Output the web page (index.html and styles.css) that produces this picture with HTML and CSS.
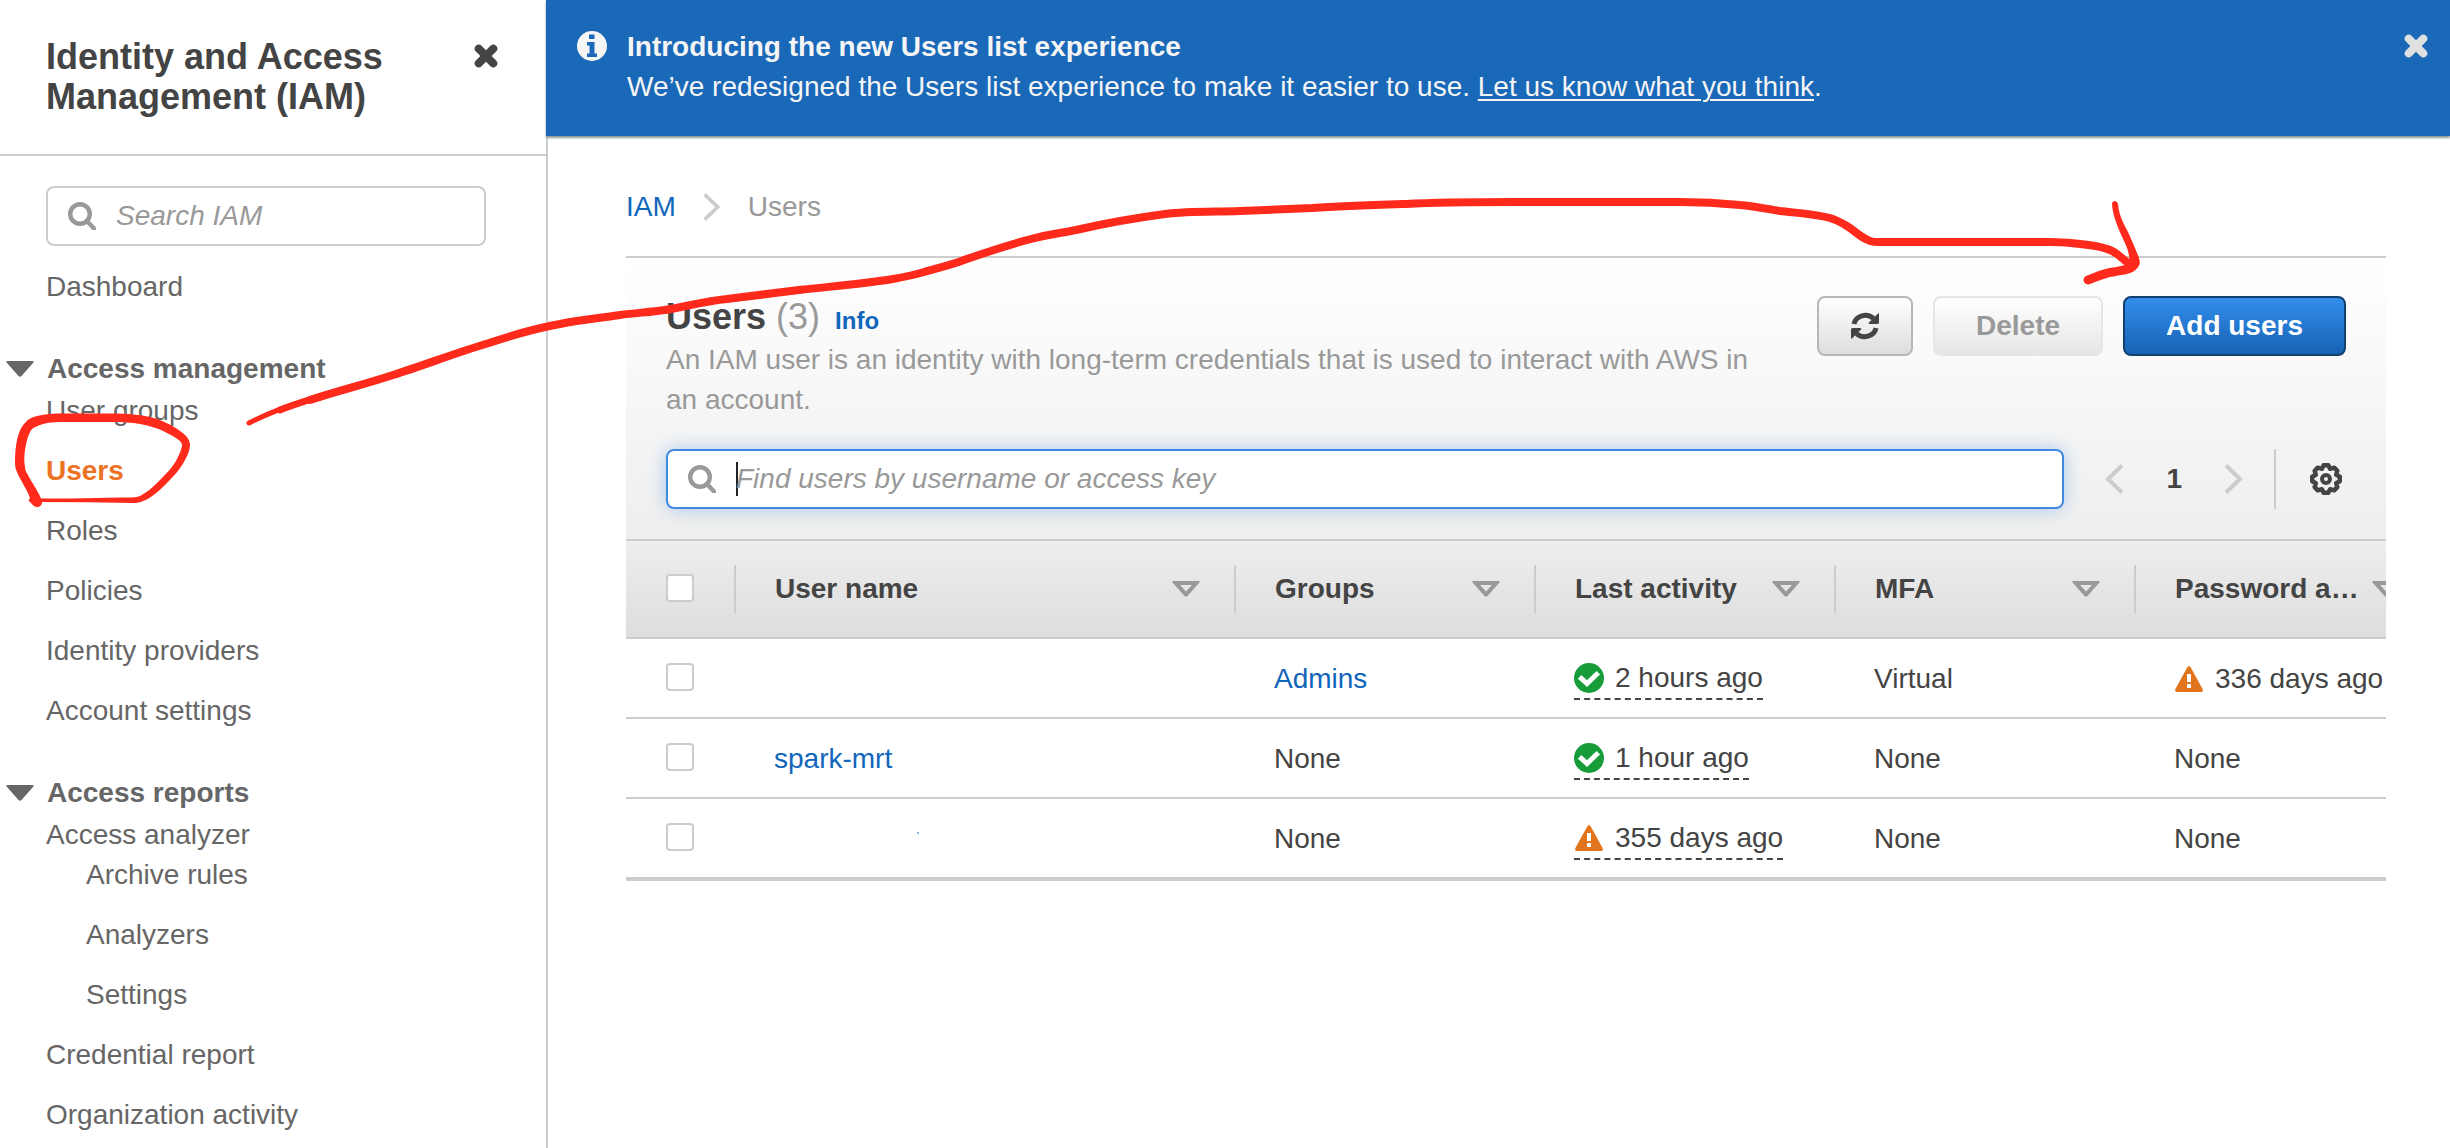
FILE: index.html
```html
<!DOCTYPE html>
<html lang="en">
<head>
<meta charset="utf-8">
<title>IAM - Users</title>
<link rel="stylesheet" href="styles.css">
</head>
<body>
<svg class="sprite" aria-hidden="true">
  <symbol id="i-close" viewBox="0 0 24 24"><path d="M4.700 4.700L19.300 19.300M19.300 4.700L4.700 19.300" fill="none" stroke="currentColor" stroke-width="8" stroke-linecap="round"/></symbol>
  <symbol id="i-search" viewBox="0 0 28 28"><circle cx="12" cy="12" r="9.800" fill="none" stroke="currentColor" stroke-width="4.400"/><path d="M19 19L26 26.500" stroke="currentColor" stroke-width="4.400" stroke-linecap="round"/></symbol>
  <symbol id="i-caret" viewBox="0 0 28 16"><path d="M1.500 0H26.500Q29 0 27 2L15.500 15Q14 16.500 12.500 15L1 2Q-1 0 1.500 0Z" fill="currentColor"/></symbol>
  <symbol id="i-sort" viewBox="0 0 28 16"><path fill-rule="evenodd" d="M1.500 0H26.500Q29 0 27 2L15.500 15Q14 16.500 12.500 15L1 2Q-1 0 1.500 0ZM8 4L14 10.500L20 4Z" fill="currentColor"/></symbol>
  <symbol id="i-next" viewBox="0 0 20 30"><path d="M2 1.500L16 15L2 28.500" fill="none" stroke="currentColor" stroke-width="4"/></symbol>
  <symbol id="i-prev" viewBox="0 0 20 30"><path d="M18 1.500L4 15L18 28.500" fill="none" stroke="currentColor" stroke-width="4"/></symbol>
  <symbol id="i-ok" viewBox="0 0 30 30"><circle cx="15" cy="15" r="15" fill="#169c38"/><path d="M7.500 15.500L13 20.500L22.500 11.500" fill="none" stroke="#fff" stroke-width="5" stroke-linecap="square"/></symbol>
  <symbol id="i-warn" viewBox="0 0 28 26"><path d="M14 0Q15 0 15.800 1.500L27.600 23Q28.600 26 26.500 26H1.500Q-.6 26 .4 23L12.200 1.500Q13 0 14 0Z" fill="#e0751d"/><path d="M12 8h4v8h-4zM12 18h4v4h-4z" fill="#fff"/></symbol>
</svg>

<div class="app">
  <aside class="sidebar">
    <header class="side-head">
      <h2>Identity and Access Management (IAM)</h2>
      <button class="icon-btn" aria-label="Close navigation"><svg class="s24"><use href="#i-close"/></svg></button>
    </header>
    <nav class="side-nav">
      <label class="field side-search">
        <svg class="s28"><use href="#i-search"/></svg>
        <input type="text" placeholder="Search IAM" aria-label="Search IAM">
      </label>
      <a href="#">Dashboard</a>
      <section>
        <h3><svg class="caret"><use href="#i-caret"/></svg>Access management</h3>
        <ul>
          <li><a href="#">User groups</a></li>
          <li><a href="#" class="active" aria-current="page">Users</a></li>
          <li><a href="#">Roles</a></li>
          <li><a href="#">Policies</a></li>
          <li><a href="#">Identity providers</a></li>
          <li><a href="#">Account settings</a></li>
        </ul>
      </section>
      <section>
        <h3><svg class="caret"><use href="#i-caret"/></svg>Access reports</h3>
        <ul>
          <li><a href="#">Access analyzer</a>
            <ul class="sub">
              <li><a href="#">Archive rules</a></li>
              <li><a href="#">Analyzers</a></li>
              <li><a href="#">Settings</a></li>
            </ul>
          </li>
          <li><a href="#">Credential report</a></li>
          <li><a href="#">Organization activity</a></li>
        </ul>
      </section>
    </nav>
  </aside>

  <div class="content">
    <div class="banner" role="status">
      <svg class="s30" viewBox="0 0 30 30"><circle cx="15" cy="15" r="15" fill="#f5f5f5"/><path d="M12 3.500h5.500v4.500H12zM10 11h7.500v11.500H20V26H10v-3.500h2.500V14.500H10z" fill="#1a68b8"/></svg>
      <div class="banner-text">
        <strong>Introducing the new Users list experience</strong>
        <p>We’ve redesigned the Users list experience to make it easier to use. <a href="#">Let us know what you think</a>.</p>
      </div>
      <button class="icon-btn light" aria-label="Dismiss"><svg class="s24"><use href="#i-close"/></svg></button>
    </div>

    <main>
      <nav class="crumbs" aria-label="Breadcrumb">
        <a href="#">IAM</a>
        <svg class="chev"><use href="#i-next"/></svg>
        <span>Users</span>
      </nav>

      <section class="panel">
        <div class="panel-head">
          <div class="title-row">
            <div class="title">
              <h1>Users <span>(3)</span> <a href="#">Info</a></h1>
              <p>An IAM user is an identity with long-term credentials that is used to interact with AWS in an account.</p>
            </div>
            <div class="actions">
              <button class="btn refresh" aria-label="Refresh"><svg class="s28" viewBox="0 0 28 28"><path d="M3 12A11.500 10.500 0 0 1 22.500 6.500" fill="none" stroke="currentColor" stroke-width="5"/><path d="M28 1.500V10.500Q28 12 26.500 12H18.500Q17 12 18 10.500L27 1.500Z" fill="currentColor"/><path d="M25 16A11.500 10.500 0 0 1 5.500 21.500" fill="none" stroke="currentColor" stroke-width="5"/><path d="M0 26.500V17.500Q0 16 1.500 16H9.500Q11 16 10 17.500L1 26.500Z" fill="currentColor"/></svg></button>
              <button class="btn" disabled>Delete</button>
              <button class="btn primary">Add users</button>
            </div>
          </div>
          <div class="tools">
            <label class="field find">
              <svg class="s28"><use href="#i-search"/></svg>
              <i class="cursor"></i>
              <input type="text" placeholder="Find users by username or access key" aria-label="Find users">
            </label>
            <div class="pager">
              <button class="icon-btn faint" aria-label="Previous page"><svg class="page-chev"><use href="#i-prev"/></svg></button>
              <b>1</b>
              <button class="icon-btn faint" aria-label="Next page"><svg class="page-chev"><use href="#i-next"/></svg></button>
            </div>
            <div class="prefs">
              <button class="icon-btn" aria-label="Preferences"><svg class="s32" viewBox="0 0 32 32"><path d="M13.800 2.200H18.200L20.200 5.800L24.200 4.700L27.300 7.800L26.200 11.800L29.800 13.800V18.200L26.200 20.200L27.300 24.200L24.200 27.300L20.200 26.200L18.200 29.800H13.800L11.800 26.200L7.800 27.300L4.700 24.200L5.800 20.200L2.200 18.200V13.800L5.800 11.800L4.700 7.800L7.800 4.700L11.800 5.800Z" fill="none" stroke="currentColor" stroke-width="4.500" stroke-linejoin="round"/><circle cx="16" cy="16" r="4" fill="none" stroke="currentColor" stroke-width="4"/></svg></button>
            </div>
          </div>
        </div>
        <div class="table-wrap">
          <table>
            <colgroup><col class="c-check"><col class="c-name"><col class="c-std"><col class="c-std"><col class="c-std"><col class="c-std"></colgroup>
            <thead>
              <tr>
                <th class="check"><input type="checkbox" aria-label="Select all"></th>
                <th><div><span>User name</span><svg class="caret"><use href="#i-sort"/></svg></div></th>
                <th><div><span>Groups</span><svg class="caret"><use href="#i-sort"/></svg></div></th>
                <th><div><span>Last activity</span><svg class="caret"><use href="#i-sort"/></svg></div></th>
                <th><div><span>MFA</span><svg class="caret"><use href="#i-sort"/></svg></div></th>
                <th><div><span>Password a…</span><svg class="caret"><use href="#i-sort"/></svg></div></th>
              </tr>
            </thead>
            <tbody>
              <tr>
                <td class="check"><input type="checkbox" aria-label="Select user"></td>
                <td></td>
                <td><a href="#">Admins</a></td>
                <td><span class="status dashed"><svg class="s30"><use href="#i-ok"/></svg>2 hours ago</span></td>
                <td>Virtual</td>
                <td><span class="status"><svg class="warn"><use href="#i-warn"/></svg>336 days ago</span></td>
              </tr>
              <tr>
                <td class="check"><input type="checkbox" aria-label="Select spark-mrt"></td>
                <td><a href="#">spark-mrt</a></td>
                <td>None</td>
                <td><span class="status dashed"><svg class="s30"><use href="#i-ok"/></svg>1 hour ago</span></td>
                <td>None</td>
                <td>None</td>
              </tr>
              <tr>
                <td class="check"><input type="checkbox" aria-label="Select user"></td>
                <td></td>
                <td>None</td>
                <td><span class="status dashed"><svg class="warn"><use href="#i-warn"/></svg>355 days ago</span></td>
                <td>None</td>
                <td>None</td>
              </tr>
            </tbody>
          </table>
        </div>
      </section>
    </main>
  </div>
</div>

<!-- Hand-drawn markup: ring round "Users" and arrow to "Add users" -->
<svg class="ink" width="2450" height="1148" viewBox="0 0 2450 1148" aria-hidden="true">
  <path fill="#ff2a1c" fill-rule="evenodd" d="M42 502C42 505 40 507 37 507C34 507 32 504 30 502C28 501 29 499 30 498C27 489 20 480 17 472C15 468 15 465 15 461C15 452 16 445 17 440C19 432 21 427 25 423C28 419 32 417 37 416C45 414 54 413.500 63 413.500H113C128 413.500 140 415 150 417C162 420 172 425 180 431C187 436 190 440 190 445C190 449 188 455 185 460C181 468 174 476 167 483C159 491 150 499 143 501C140 502.500 137 503 133 503Q88 502 42 502ZM41 498.500H72L120 497.500C128 497.500 136 498 140 496C147 492 152 488 157 483C166 474 173 467 177 459C180 453 182 448 182 445C182 441 175 437 167 433C158 428 150 426 140 424C132 422.500 122 422 113 422H60C52 422 45 423 40 425C35 427 32 428 30 432C27 438 26 444 25 450C24 457 24 462 25 467C25 470 26 472 28 475C32 483 37 489 41 498.500Z"/>
  <g fill="none" stroke="#ff2a1c" stroke-linecap="round" stroke-linejoin="round">
    <path stroke-width="5" d="M249 423C268 413 288 406 307 400"/>
    <path stroke-width="7" d="M280 410C300 402 328 394 357 386"/>
    <path stroke-width="8" d="M310 400C340 390 366 384 393 375C425 365 455 353 489 343C513 335 537 328 560 324C580 320 600 318 620 315C636 313 650 312 665 310C688 306 706 301 727 299C750 296 775 293 799 290C835 286 862 284 893 279C904 277 914 275 924 272C938 268 951 265 964 260C987 252 1008 245 1031 239C1046 235 1061 233 1076 230C1106 223 1135 218 1165 214C1190 211 1215 212 1240 211C1265 210 1288 209 1312 208C1343 206 1375 205 1406 204C1440 202 1480 202 1516 202H1680C1703 202 1720 203 1740 205C1753 206 1767 209 1780 211C1797 213 1815 214 1830 218C1837 220 1842 223 1847 226C1855 231 1860 237 1868 240Q1871 242 1878 242H2050C2063 242 2070 243 2080 244C2090 245 2099 246 2107 249C2111 250 2114 252 2117 254C2122 258 2127 262 2132 267"/>
    <path stroke-width="9" d="M2134 264C2132 270 2122 270 2113 272C2104 273 2096 277 2088 280"/>
  </g>
  <path fill="#ff2a1c" d="M2112 203Q2113 201 2115 201Q2117 201 2118 204C2119 216 2124 224 2128 232C2132 241 2136 250 2139 258C2141 264 2139 268 2134 270L2129 262C2130 257 2128 249 2124 241C2118 228 2112 214 2112 203Z"/>
  <rect x="917" y="832" width="2" height="2" fill="#8fb6de"/>
</svg>
</body>
</html>
```
FILE: styles.css
```css
* { box-sizing: border-box; }
body { margin: 0; font: 28px/40px "Liberation Sans", Arial, sans-serif; color: #444; background: #fff; }
h1, h2, h3, p, ul { margin: 0; padding: 0; }
ul { list-style: none; }
a { color: #1166bb; text-decoration: none; }
svg { display: block; flex: none; }
button { font: inherit; cursor: pointer; }
.sprite { position: absolute; width: 0; height: 0; }
.s24 { width: 24px; height: 24px; }
.s28 { width: 28px; height: 28px; }
.s30 { width: 30px; height: 30px; }
.s32 { width: 32px; height: 32px; }
.caret { width: 28px; height: 16px; }
.chev { width: 20px; height: 28px; }
.page-chev { width: 20px; height: 30px; }
.warn { width: 28px; height: 26px; margin: 0 1px; }
.icon-btn { border: 0; padding: 0; background: none; color: #444; flex: none; }
.icon-btn.light { color: #e0e0e0; }
.icon-btn.faint { color: #ccc; }

.app { display: flex; min-height: 100vh; }
.sidebar { flex: none; width: 548px; border-right: 2px solid #c8cdcd; }
.side-head { display: flex; justify-content: space-between; align-items: flex-start; padding: 37px 48px 37px 46px; border-bottom: 2px solid #ccc; }
.side-head h2 { font-size: 36px; line-height: 40px; width: 360px; }
.side-head .icon-btn { margin-top: 7px; }
.side-nav { padding: 30px 60px 13px 46px; }
.side-nav a, .side-nav h3 { display: block; color: #666; font-size: 28px; line-height: 40px; }
.side-nav a.active { color: #ec7224; font-weight: bold; }
.field { display: flex; align-items: center; gap: 20px; height: 60px; padding: 0 20px; border: 2px solid #ccc; border-radius: 8px; background: #fff; color: #999; }
.field input { flex: 1; min-width: 0; border: 0; padding: 0; outline: 0; background: none; font: italic 28px/40px "Liberation Sans", Arial, sans-serif; color: #444; }
.field input::placeholder { color: #999; opacity: 1; }
.side-search { margin-bottom: 21px; }
.side-nav section { margin-top: 42px; }
.side-nav h3 { display: flex; align-items: center; gap: 13px; margin: 0 0 2px -40px; }
.side-nav li + li { margin-top: 20px; }
.side-nav .sub { padding-left: 40px; }

.content { flex: 1; min-width: 0; }
.banner { display: flex; align-items: flex-start; gap: 20px; margin-left: -2px; padding: 27px 22px 29px 31px; background: #1a68b8; color: #f5f5f5; box-shadow: 0 2px 2px #8f9699; position: relative; }
.banner > svg { margin-top: 4px; }
.banner-text { flex: 1; }
.banner-text a { color: inherit; text-decoration: underline; text-decoration-thickness: 2px; text-underline-offset: 3px; }
.banner .icon-btn { margin-top: 7px; }
main { padding: 51px 64px 40px 78px; }
.crumbs { display: flex; align-items: center; gap: 26px; padding-bottom: 29px; border-bottom: 2px solid #ccc; color: #999; }
.crumbs svg { color: #ccc; }

.panel-head { padding: 38px 40px 30px; background: linear-gradient(#fff, #eee); border-bottom: 2px solid #ccc; }
.title-row { display: flex; align-items: flex-start; justify-content: space-between; gap: 20px; }
.title { max-width: 1110px; }
.title h1 { font-size: 36px; line-height: 42px; margin-bottom: -2px; }
.title h1 span { font-weight: normal; color: #999; }
.title h1 a { font-size: 24px; margin-left: 5px; }
.title p { color: #999; }
.actions { display: flex; gap: 20px; }
.btn { height: 60px; padding: 0 41px; border: 2px solid #b7b7b7; border-radius: 8px; background: linear-gradient(#fff, #ddd); color: #444; font-weight: bold; }
.btn.refresh { padding: 0 32px; }
.btn:disabled { border-color: #e6e6e6; color: #999; background: linear-gradient(#fff, #e6e6e6); }
.btn.primary { border-color: #14406f; color: #fff; background: linear-gradient(#338eeb, #1763b4); }
.tools { display: flex; align-items: center; margin-top: 29px; }
.find { flex: 1; border-color: #3d8ae0; box-shadow: 0 0 18px rgba(61, 138, 224, .4); }
.cursor { width: 2px; height: 34px; margin-right: -22px; background: #222; }
.pager { display: flex; align-items: center; gap: 42px; padding: 0 30px 0 40px; }
.prefs { height: 60px; border-left: 2px solid #ccc; padding: 14px 4px 14px 34px; }

.table-wrap { overflow: hidden; border-bottom: 4px solid #ccc; }
table { width: 1808px; table-layout: fixed; border-collapse: separate; border-spacing: 0; }
.c-check { width: 108px; }
.c-name { width: 500px; }
.c-std { width: 300px; }
thead { background: linear-gradient(#eee, #ddd); }
th, td { padding: 0; text-align: left; }
th { height: 98px; border-bottom: 2px solid #ccc; }
th div { display: flex; align-items: center; justify-content: space-between; gap: 8px; height: 48px; padding: 0 34px 0 39px; border-left: 2px solid #ccc; }
th span { white-space: nowrap; }
th svg { color: #999; }
td { height: 80px; padding: 2px 0 0 40px; border-bottom: 2px solid #ccc; white-space: nowrap; }
tbody tr:last-child td { border-bottom: 0; height: 78px; }
th.check, td.check { padding: 0 0 2px 40px; }
input[type=checkbox] { appearance: none; display: block; width: 28px; height: 28px; margin: 0; border: 2px solid #ccc; border-radius: 4px; background: #fff; }
.status { display: inline-flex; align-items: center; gap: 11px; vertical-align: top; }
.dashed { border-bottom: 2px dashed #444; }

.ink { position: absolute; left: 0; top: 0; pointer-events: none; }
```
